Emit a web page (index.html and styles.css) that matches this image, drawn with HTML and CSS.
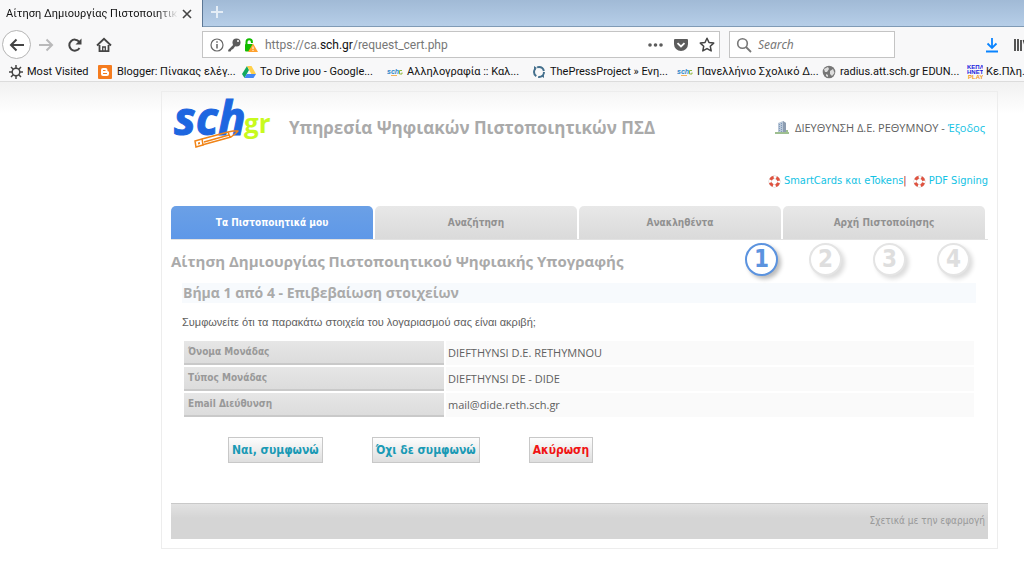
FILE: index.html
```html
<!DOCTYPE html>
<html lang="el">
<head>
<meta charset="utf-8">
<title>Αίτηση Δημιουργίας Πιστοποιητικού</title>
<link rel="stylesheet" href="styles.css">
</head>
<body>
<svg class="defs" width="0" height="0" aria-hidden="true">
  <symbol id="buoy" viewBox="0 0 14 14">
    <circle cx="7" cy="7" r="4.6" fill="none" stroke="#c9c4c4" stroke-width="3.6"/>
    <circle cx="7" cy="7" r="4.6" fill="none" stroke="#fff" stroke-width="2.8"/>
    <circle cx="7" cy="7" r="4.6" fill="none" stroke="#e0523f" stroke-width="3.2" stroke-dasharray="4.2 3.03" stroke-dashoffset="-1.5"/>
  </symbol>
</svg>

<header class="browser">
  <div class="tabstrip">
    <div class="tab"><span class="tab-title">Αίτηση Δημιουργίας Πιστοποιητικ</span>
      <button class="icon-btn" aria-label="Close tab"><svg width="10" height="10" viewBox="0 0 10 10"><path d="M1 1l8 8M9 1l-8 8" stroke="#444" stroke-width="1.6"/></svg></button>
    </div>
    <button class="icon-btn new-tab" aria-label="New tab"><svg width="12" height="12" viewBox="0 0 12 12"><path d="M6 0v12M0 6h12" stroke="#e4edf6" stroke-width="2"/></svg></button>
  </div>

  <div class="toolbar">
    <nav class="nav-buttons">
      <button class="icon-btn back" aria-label="Back"><svg width="16" height="14" viewBox="0 0 16 14"><path d="M15 7H2M7.500 1.500L2 7l5.500 5.500" fill="none" stroke="#444" stroke-width="2"/></svg></button>
      <button class="icon-btn" aria-label="Forward"><svg width="16" height="14" viewBox="0 0 16 14"><path d="M1 7h13M8.500 1.500L14 7l-5.500 5.500" fill="none" stroke="#b9b9ba" stroke-width="2"/></svg></button>
      <button class="icon-btn" aria-label="Reload"><svg width="16" height="16" viewBox="0 0 16 16"><path d="M12.500 11a5.500 5.500 0 1 1-.3-6.200" fill="none" stroke="#444" stroke-width="2"/><path d="M14.500 1.500v6H8.500z" fill="#444"/></svg></button>
      <button class="icon-btn" aria-label="Home"><svg width="16" height="16" viewBox="0 0 16 16"><path d="M1 8.500L8 1.800l7 6.700M3.500 8v6.200h9V8" fill="none" stroke="#444" stroke-width="1.800"/><path d="M6.700 14v-4h2.600v4" fill="none" stroke="#444" stroke-width="1.300"/></svg></button>
    </nav>
    <div class="urlbar">
      <svg width="14" height="14" viewBox="0 0 14 14"><circle cx="7" cy="7" r="6" fill="none" stroke="#666" stroke-width="1.200"/><path d="M7 6v4.500M7 3.200v1.600" stroke="#666" stroke-width="1.500"/></svg>
      <svg width="14" height="14" viewBox="0 0 14 14"><circle cx="9.500" cy="4.500" r="4" fill="#5c5c5c"/><circle cx="11" cy="3" r="1" fill="#fff"/><path d="M7.500 5.500L1.200 12v1.500h2.300l1-1.800 1.600-.6L8 8.500" fill="#5c5c5c"/></svg>
      <svg width="14" height="14" viewBox="0 0 14 14"><path d="M2.500 7V4a2.700 2.700 0 0 1 5.400 0v1" fill="none" stroke="#12bc00" stroke-width="2"/><rect x="1" y="6" width="8" height="7.500" rx="1" fill="#12bc00"/><path d="M9 5.500l5 8.500H4z" fill="#ffa12e"/><path d="M9 8.500v2.700M9 12v1" stroke="#fff"/></svg>
      <div class="url"><span>https://ca.</span><strong>sch.gr</strong><span>/request_cert.php</span></div>
      <div class="page-actions">
        <svg width="16" height="14" viewBox="0 0 16 14"><g fill="#5c5c5c"><circle cx="3" cy="7" r="1.800"/><circle cx="8.500" cy="7" r="1.800"/><circle cx="14" cy="7" r="1.800"/></g></svg>
        <svg width="16" height="14" viewBox="0 0 16 14"><path d="M2 1h12q1 0 1 1v4a7 7 0 0 1-14 0V2q0-1 1-1z" fill="#5c5c5c"/><path d="M4.500 5.200L8 8.500l3.500-3.300" fill="none" stroke="#fff" stroke-width="1.800"/></svg>
        <svg width="16" height="15" viewBox="0 0 16 15"><path d="M8 1.200l2 4.300 4.700.6-3.400 3.200.9 4.600L8 11.600l-4.200 2.300.9-4.600L1.300 6.100 6 5.500z" fill="none" stroke="#444" stroke-width="1.500" stroke-linejoin="round"/></svg>
      </div>
    </div>
    <label class="search">
      <svg width="16" height="16" viewBox="0 0 16 16"><circle cx="6.500" cy="6.500" r="4.800" fill="none" stroke="#777" stroke-width="1.600"/><path d="M10 10l5 5" stroke="#777" stroke-width="1.800"/></svg>
      <input type="search" placeholder="Search" aria-label="Search">
    </label>
    <div class="toolbar-end">
      <button class="icon-btn" aria-label="Downloads"><svg width="14" height="16" viewBox="0 0 14 16"><path d="M7 1v10M2.500 6.500L7 11l4.500-4.500M1 14.500h12" fill="none" stroke="#0a84ff" stroke-width="1.800"/></svg></button>
      <button class="icon-btn" aria-label="Library"><svg width="16" height="14" viewBox="0 0 16 14"><path d="M2 1v12M5 1v12M8 2v11M10.500 2l3.500 11" stroke="#444" stroke-width="1.800"/></svg></button>
    </div>
  </div>

  <nav class="bookmarks">
    <a href="#" class="first"><svg width="14" height="14" viewBox="0 0 14 14"><circle cx="7" cy="7" r="3.800" fill="none" stroke="#444" stroke-width="1.500"/><path d="M7 0v3M7 11v3M0 7h3M11 7h3M2 2l2.200 2.200M9.800 9.800L12 12M12 2L9.800 4.200M4.200 9.800L2 12" stroke="#444" stroke-width="1.500"/></svg><span>Most Visited</span></a>
    <a href="#"><svg width="16" height="14" viewBox="0 0 16 14"><rect x="1" width="14" height="14" rx="1" fill="#f57c1f"/><path d="M6 3h2.500a2 2 0 0 1 2 2v1l1.500.7V9a2 2 0 0 1-2 2H6a2 2 0 0 1-2-2V5a2 2 0 0 1 2-2z" fill="#fff"/><path d="M6 5.500h2.500M6 8.500h4" stroke="#f57c1f" stroke-width="1.200"/></svg><span>Blogger: Πίνακας ελέγ...</span></a>
    <a href="#"><svg width="14" height="14" viewBox="0 0 14 14"><path d="M5 1L0 9l2.500 4L7 5z" fill="#12a85f"/><path d="M5 1h4.500L14 9H9.300z" fill="#ffd04b"/><path d="M4.700 9H14l-2.500 4h-9z" fill="#4387f5"/></svg><span>Το Drive μου - Google...</span></a>
    <a href="#"><svg width="16" height="14" viewBox="0 0 16 14"><text x="0" y="9" class="mini-blue">sch</text><path d="M4 10.500h6" stroke="#f2b35c"/><path d="M15 5.500h-2.500v3.500H15V7.500" fill="none" stroke="#8fb83c"/></svg><span>Αλληλογραφία :: Καλ...</span></a>
    <a href="#"><svg width="14" height="14" viewBox="0 0 14 14"><circle cx="7" cy="7" r="5" fill="none" stroke="#446f8c" stroke-width="2" stroke-dasharray="8.500 2"/><path d="M2 1l3 2-3 2M12 13l-3-2 3-2" fill="#446f8c"/></svg><span>ThePressProject » Ενη...</span></a>
    <a href="#"><svg width="16" height="14" viewBox="0 0 16 14"><text x="0" y="9" class="mini-blue">sch</text><path d="M4 10.500h6" stroke="#f2b35c"/><path d="M15 5.500h-2.500v3.500H15V7.500" fill="none" stroke="#8fb83c"/></svg><span>Πανελλήνιο Σχολικό Δ...</span></a>
    <a href="#"><svg width="14" height="14" viewBox="0 0 14 14"><circle cx="7" cy="7" r="6.300" fill="#777"/><path d="M2 4l4-2 1 2-2 3-2 0zM8 6l3-2 1.500 4L10 11 8 9zM4 9l2 1v2l-2-1z" fill="#ddd"/></svg><span>radius.att.sch.gr EDUN...</span></a>
    <a href="#" class="last"><svg width="16" height="16" viewBox="0 0 16 16"><text x="0" y="5" class="keplinet">ΚΕΠΛ</text><text x="0" y="10" class="keplinet">ΗΝΕΤ</text><text x="1" y="15" class="keplinet orange">PLAY</text></svg><span>Κε.Πλη.</span></a>
  </nav>
</header>

<main class="page">
  <div class="container">
    <header class="site-head">
      <svg class="logo" width="100" height="50" viewBox="0 0 100 50" role="img" aria-label="sch.gr">
        <text x="70" y="34" class="logo-gr">gr</text>
        <text x="0" y="36" class="logo-sch">sch</text>
        <path d="M28 40L54 33l5-1 5 0-3 3-4 3-29 8M54 33l2 5M30 43l25-7" fill="none" stroke="#f08418" stroke-width="1.500" stroke-linejoin="round"/>
        <path d="M21 42l7-2 1 6-7 2z" fill="#fff" stroke="#f08418" stroke-width="1.500"/><path d="M24 43.500l2-.5v2l-2 .5z" fill="#f08418"/>
      </svg>
      <h1>Υπηρεσία Ψηφιακών Πιστοποιητικών ΠΣΔ</h1>
      <div class="user">
        <svg width="14" height="14" viewBox="0 0 14 14"><path d="M3 12V3l5-2 3 2v9z" fill="#b9c7d8"/><path d="M8 1l3 2v9H8z" fill="#8d9db1"/><path d="M4.500 4v8M6.500 3v9" stroke="#7f9abb" stroke-dasharray="1 1"/><path d="M0 13h14M11 11h2" stroke="#7fab6c" stroke-width="1.400"/></svg>
        <span>ΔΙΕΥΘΥΝΣΗ Δ.Ε. ΡΕΘΥΜΝΟΥ - <a href="#">Έξοδος</a></span>
      </div>
    </header>

    <div class="help">
      <svg width="13" height="13"><use href="#buoy"/></svg><a href="#">SmartCards και eTokens</a><span class="bar">|</span>
      <svg width="13" height="13"><use href="#buoy"/></svg><a href="#">PDF Signing</a>
    </div>

    <nav class="tabs">
      <a href="#" class="active">Τα Πιστοποιητικά μου</a>
      <a href="#">Αναζήτηση</a>
      <a href="#">Ανακληθέντα</a>
      <a href="#">Αρχή Πιστοποίησης</a>
    </nav>

    <div class="title-row">
      <h2>Αίτηση Δημιουργίας Πιστοποιητικού Ψηφιακής Υπογραφής</h2>
      <ol class="steps"><li class="current">1</li><li>2</li><li>3</li><li>4</li></ol>
    </div>

    <section class="content">
      <h3>Βήμα 1 από 4 - Επιβεβαίωση στοιχείων</h3>
      <p>Συμφωνείτε ότι τα παρακάτω στοιχεία του λογαριασμού σας είναι ακριβή;</p>
      <table>
        <tr><th scope="row">Όνομα Μονάδας</th><td>DIEFTHYNSI D.E. RETHYMNOU</td></tr>
        <tr><th scope="row">Τύπος Μονάδας</th><td>DIEFTHYNSI DE - DIDE</td></tr>
        <tr><th scope="row">Email Διεύθυνση</th><td>mail@dide.reth.sch.gr</td></tr>
      </table>
      <div class="actions">
        <button>Ναι, συμφωνώ</button>
        <button>Όχι δε συμφωνώ</button>
        <button class="cancel">Ακύρωση</button>
      </div>
    </section>

    <footer><a href="#">Σχετικά με την εφαρμογή</a></footer>
  </div>
</main>
</body>
</html>
```
FILE: styles.css
```css
* { box-sizing: border-box; }
html { overflow: hidden; }
body {
  margin: 0;
  background: #fff;
  color: #606060;
  font: 11px/16px "DejaVu Sans Condensed", "DejaVu Sans", sans-serif;
}
a { color: #12c2e4; text-decoration: none; }
svg { flex: none; display: block; }
.defs { position: absolute; }
.icon-btn { display: flex; align-items: center; justify-content: center; padding: 0; border: 0; background: none; }

/* Browser window */
.browser {
  font: 11px/16px Roboto, "Noto Sans", sans-serif;
  color: #111;
  background: #f8f8f9;
  border-bottom: 1px solid #dcdcdc;
}
.tabstrip {
  display: flex;
  height: 27px;
  background: linear-gradient(#a1bad6, #b6cee8);
  border-bottom: 1px solid #7f9ab5;
}
.tab {
  display: flex;
  align-items: center;
  gap: 4px;
  width: 203px;
  height: 27px;
  padding: 0 10px 0 6px;
  background: #f8f8f9;
  border-right: 1px solid #5c7795;
}
.tab-title {
  flex: 1;
  white-space: nowrap;
  mask-image: linear-gradient(90deg, #000 88%, transparent);
}
.new-tab { width: 28px; height: 24px; }
.toolbar { display: flex; align-items: center; height: 34px; padding-top: 1px; overflow: hidden; }
.nav-buttons { display: flex; align-items: center; gap: 13px; width: 202px; padding-left: 2px; }
.back { width: 29px; height: 29px; margin-right: -6px; border: 1px solid #b5b5b5; border-radius: 50%; background: #fff; }
.urlbar, .search {
  display: flex;
  align-items: center;
  height: 27px;
  background: #fff;
  border: 1px solid #c4c4c4;
}
.urlbar { flex: 1; gap: 3px; padding: 0 4px 0 7px; }
.url { flex: 1; margin-left: 4px; font-size: 12px; color: #777; }
.url strong { font-weight: 400; color: #111; }
.page-actions { display: flex; align-items: center; gap: 10px; }
.search { width: 166px; margin-left: 9px; padding: 0 6px; gap: 6px; }
.search input { flex: 1; min-width: 0; padding: 0; border: 0; outline: 0; background: none; font: italic 12px/16px "Noto Sans", "Open Sans", sans-serif; }
.search input::placeholder { color: #777; opacity: 1; }
.toolbar-end { display: flex; gap: 14px; width: 129px; padding-left: 90px; }
.bookmarks { display: flex; height: 20px; padding: 1px 0 0 9px; }
.bookmarks a { display: flex; align-items: center; flex: none; gap: 4px; width: 145px; color: #111; white-space: nowrap; }
.bookmarks .first { width: 88px; }
.bookmarks .last { gap: 3px; width: auto; }
.mini-blue { font: italic bold 7px "Liberation Sans", sans-serif; fill: #2f87c9; }
.keplinet { font: bold 6px "Liberation Sans", sans-serif; fill: #2323dd; }
.keplinet.orange { fill: #f59a1c; }

/* Page */
.page { padding: 9px 26px 15px 161px; background: linear-gradient(#f1f1f1, #fff 32px); }
.container { padding: 7px 9px 9px; border: 1px solid #ededed; }
.site-head { display: flex; align-items: flex-start; height: 74px; padding: 0 3px; }
.logo { overflow: visible; }
.logo-sch { font: italic bold 46px "Open Sans", sans-serif; fill: #1d66e0; stroke: #1d66e0; }
.logo-gr { font: bold 26px "Open Sans", sans-serif; fill: #c8fa1e; }
h1, h2, h3 { margin: 0; color: #aaa; font-family: "Open Sans", "Noto Sans", sans-serif; font-weight: 700; white-space: nowrap; }
h1 { margin: 17px 0 0 15px; font-size: 17px; line-height: 24px; }
.user { display: flex; gap: 6px; margin: 21px 0 0 auto; white-space: nowrap; }
.user, td { font-family: "Open Sans", "Noto Sans", sans-serif; }
.help { display: flex; align-items: center; justify-content: flex-end; gap: 3px; white-space: nowrap; }
.bar { margin: 0 3px 0 -3px; color: #a33; }
.tabs { display: flex; gap: 2px; margin-top: 17px; padding-right: 3px; border-bottom: 1px solid #e2e2e2; }
.tabs a {
  flex: 1;
  border-radius: 5px 5px 0 0;
  background: linear-gradient(#e8e8e8, #dadada);
  color: #919191;
  font-size: 10px;
  font-weight: 700;
  line-height: 32px;
  padding-top: 1px;
  text-align: center;
}
.tabs .active { background: linear-gradient(#6ba0e6, #5e98e8); color: #fff; }
.title-row { display: flex; align-items: center; justify-content: space-between; height: 41px; padding-right: 18px; }
h2 { font-size: 15px; line-height: 24px; }
.steps { display: flex; gap: 31px; margin: 0; padding: 0 0 3px; list-style: none; }
.steps li {
  width: 33px;
  height: 33px;
  border: 2px solid #e4e4e4;
  border-radius: 50%;
  background: #fff;
  box-shadow: 3px 3px 4px #ddd;
  color: #dedede;
  font: 700 24px/29px "DejaVu Sans Condensed", "DejaVu Sans", sans-serif;
  text-align: center;
}
.steps .current { border-color: #5b93df; color: #5b93df; box-shadow: 3px 3px 4px #bbb; }
.content { padding: 2px 12px 0 11px; }
h3 { padding-left: 1px; background: #f7fafd; font-size: 14px; line-height: 20px; }
p { margin: 11px 0 9px; font-family: "Liberation Sans", sans-serif; }
table { width: 100%; border-collapse: separate; border-spacing: 2px; table-layout: fixed; }
th, td { height: 24px; padding: 0 4px; text-align: left; }
th { width: 260px; background: linear-gradient(#e6e6e6, #dcdcdc); border-bottom: 2px solid #c9c9c9; color: #999; font-size: 10px; }
td { padding-left: 4px; background: #fafafa; }
td { padding-left: 2px; }
.actions { display: flex; gap: 49px; padding: 18px 0 40px 46px; }
.actions button {
  height: 26px;
  padding: 0 3px;
  border: 1px solid #c8c8c8;
  background: linear-gradient(#fdfdfd, #dedede);
  color: #1a9ab5;
  font: 700 12px/16px "DejaVu Sans Condensed", "DejaVu Sans", sans-serif;
}
.actions .cancel { color: #f01414; }
footer {
  padding: 9px 3px 10px;
  border-top: 1px solid #c9c9c9;
  background: linear-gradient(#e2e2e2, #d5d5d5 40%);
  text-align: right;
  font-size: 10px;
}
footer a { color: #999; }
```
